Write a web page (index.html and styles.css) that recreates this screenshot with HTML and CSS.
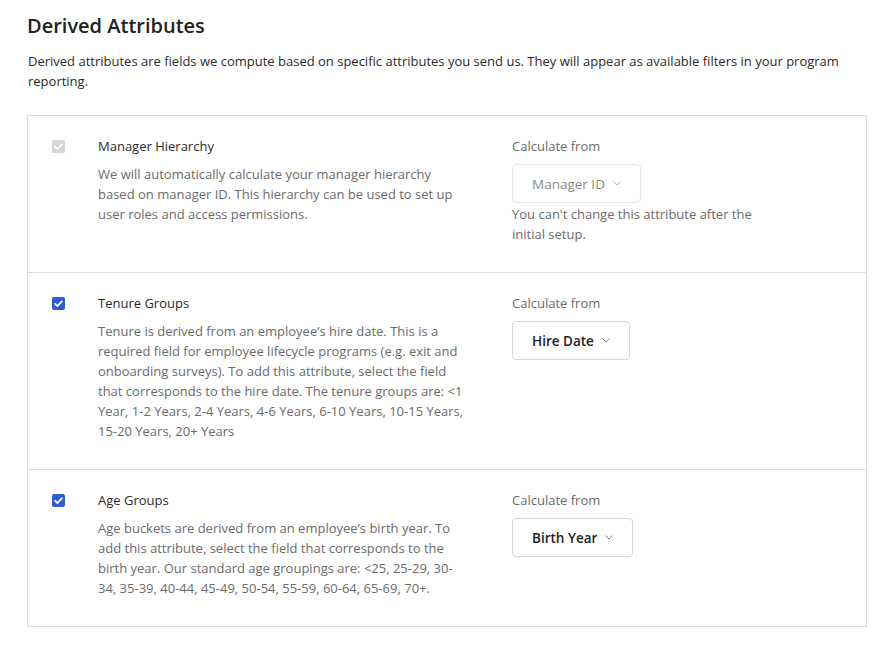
FILE: index.html
```html
<!DOCTYPE html>
<html lang="en">
<head>
  <meta charset="UTF-8">
  <title>Derived Attributes</title>
  <link rel="stylesheet" href="styles.css">
</head>
<body>
  <div class="page">
    <h1 class="page-title">Derived Attributes</h1>
    <p class="page-intro">Derived attributes are fields we compute based on specific attributes you send us. They will appear as available filters in your program reporting.</p>

    <div class="attr-list">
      <div class="attr-row">
        <div class="attr-check">
          <span class="checkbox disabled">
            <svg viewBox="0 0 13 13" width="13" height="13"><path d="M3.2 6.8 L5.4 9 L9.8 4.3" fill="none" stroke="#fff" stroke-width="1.8" stroke-linecap="round" stroke-linejoin="round"/></svg>
          </span>
        </div>
        <div class="attr-info">
          <div class="attr-name">Manager Hierarchy</div>
          <p class="attr-desc">We will automatically calculate your manager hierarchy based on manager ID. This hierarchy can be used to set up user roles and access permissions.</p>
        </div>
        <div class="attr-source">
          <div class="source-label">Calculate from</div>
          <div class="select disabled">
            Manager ID
            <svg class="chevron" viewBox="0 0 8 5" width="8" height="5"><path d="M0.5 0.5 L4 4 L7.5 0.5" fill="none" stroke="currentColor" stroke-width="1"/></svg>
          </div>
          <p class="source-note">You can't change this attribute after the initial setup.</p>
        </div>
      </div>

      <div class="attr-row">
        <div class="attr-check">
          <span class="checkbox">
            <svg viewBox="0 0 13 13" width="13" height="13"><path d="M3.2 6.8 L5.4 9 L9.8 4.3" fill="none" stroke="#fff" stroke-width="1.8" stroke-linecap="round" stroke-linejoin="round"/></svg>
          </span>
        </div>
        <div class="attr-info">
          <div class="attr-name">Tenure Groups</div>
          <p class="attr-desc">Tenure is derived from an employee’s hire date. This is a required field for employee lifecycle programs (e.g. exit and onboarding surveys). To add this attribute, select the field that corresponds to the hire date. The tenure groups are: &lt;1 Year, 1-2 Years, 2-4 Years, 4-6 Years, 6-10 Years, 10-15 Years, 15-20 Years, 20+ Years</p>
        </div>
        <div class="attr-source">
          <div class="source-label">Calculate from</div>
          <div class="select">
            Hire Date
            <svg class="chevron" viewBox="0 0 8 5" width="8" height="5"><path d="M0.5 0.5 L4 4 L7.5 0.5" fill="none" stroke="currentColor" stroke-width="1"/></svg>
          </div>
        </div>
      </div>

      <div class="attr-row">
        <div class="attr-check">
          <span class="checkbox">
            <svg viewBox="0 0 13 13" width="13" height="13"><path d="M3.2 6.8 L5.4 9 L9.8 4.3" fill="none" stroke="#fff" stroke-width="1.8" stroke-linecap="round" stroke-linejoin="round"/></svg>
          </span>
        </div>
        <div class="attr-info">
          <div class="attr-name">Age Groups</div>
          <p class="attr-desc">Age buckets are derived from an employee’s birth year. To add this attribute, select the field that corresponds to the birth year. Our standard age groupings are: &lt;25, 25-29, 30-34, 35-39, 40-44, 45-49, 50-54, 55-59, 60-64, 65-69, 70+.</p>
        </div>
        <div class="attr-source">
          <div class="source-label">Calculate from</div>
          <div class="select">
            Birth Year
            <svg class="chevron" viewBox="0 0 8 5" width="8" height="5"><path d="M0.5 0.5 L4 4 L7.5 0.5" fill="none" stroke="currentColor" stroke-width="1"/></svg>
          </div>
        </div>
      </div>
    </div>
  </div>
</body>
</html>
```

FILE: styles.css
```css
body {
  margin: 0;
  padding: 0;
  background-color: #fff;
  font-family: 'Open Sans', 'Noto Sans', sans-serif;
  color: #2b2b2b;
}

.page {
  padding: 12px 28px 24px 27px;
  width: 840px;
}

.page-title {
  margin: 0;
  font-size: 20px;
  font-weight: 600;
  line-height: 28px;
  color: #222;
}

.page-intro {
  margin: 11px 0 0 1px;
  font-size: 13px;
  line-height: 20px;
  color: #2b2b2b;
}

.attr-list {
  margin-top: 24px;
  border: 1px solid #dddddd;
}

.attr-row {
  display: flex;
  padding: 20px 24px 28px 24px;
  border-top: 1px solid #dddddd;
}

.attr-row:first-child {
  border-top: none;
}

.attr-check {
  width: 46px;
  padding-top: 4px;
}

.checkbox {
  display: flex;
  width: 13px;
  height: 13px;
  border-radius: 2px;
  background-color: #2f5bd3;
}

.checkbox.disabled {
  background-color: #d6d6d6;
}

.attr-info {
  width: 372px;
}

.attr-name {
  font-size: 13px;
  line-height: 20px;
  color: #2b2b2b;
}

.attr-desc {
  margin: 8px 0 0 0;
  font-size: 13px;
  line-height: 20px;
  color: #6b6b6b;
}

.attr-source {
  margin-left: 42px;
  width: 260px;
}

.source-label {
  font-size: 13px;
  line-height: 20px;
  color: #6b6b6b;
}

.select {
  display: inline-flex;
  align-items: center;
  gap: 8px;
  margin-top: 8px;
  height: 37px;
  padding: 0 19px;
  border: 1px solid #d6d6d6;
  border-radius: 4px;
  font-size: 13.5px;
  font-weight: 600;
  color: #222;
}

.select.disabled {
  border-color: #e6e6e6;
  font-weight: 400;
  color: #8a8a8a;
}

.chevron {
  color: #777;
}

.select.disabled .chevron {
  color: #bbb;
}

.source-note {
  margin: 1px 0 0 0;
  font-size: 13px;
  line-height: 20px;
  color: #6b6b6b;
}
```
